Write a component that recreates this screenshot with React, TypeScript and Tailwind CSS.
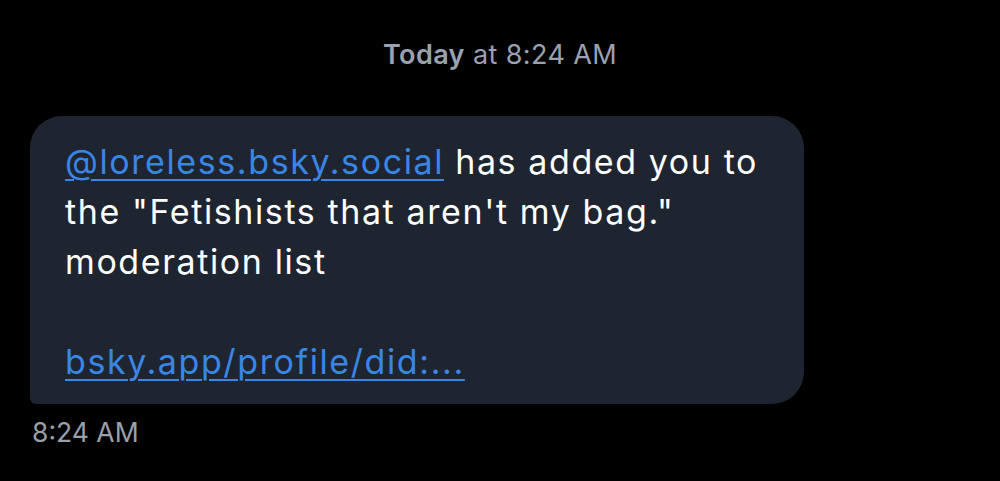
export default function App() {
	return (
		<div
			className="w-[1000px] h-[481px] bg-black overflow-hidden"
			style={{ fontFamily: "Inter, 'Noto Sans', sans-serif" }}
		>
			<div className="pt-[37px] text-center text-[27px] leading-[36px] text-[#9aa2b1] tracking-[0.4px]">
				<span className="font-semibold">Today</span> at 8:24 AM
			</div>

			<div className="ml-[30px] mt-[43px] w-[774px] rounded-[32px] rounded-bl-[6px] bg-[#1e2530] pl-[35px] pr-[20px] pt-[21px] pb-[17px] text-[34px] leading-[50px] text-white tracking-[1.6px]">
				<p className="whitespace-nowrap">
					<a className="text-[#3a86e6] underline decoration-[2px] underline-offset-[5px]">
						@loreless.bsky.social
					</a>{" "}
					has added you to
					<br />
					the "Fetishists that aren't my bag."
					<br />
					moderation list
				</p>
				<p className="mt-[50px]">
					<a className="text-[#3a86e6] underline decoration-[2px] underline-offset-[5px]">
						bsky.app/profile/did:...
					</a>
				</p>
			</div>

			<div className="ml-[32px] mt-[12px] text-[26.5px] leading-[32px] text-[#9aa0aa]">8:24 AM</div>
		</div>
	);
}
